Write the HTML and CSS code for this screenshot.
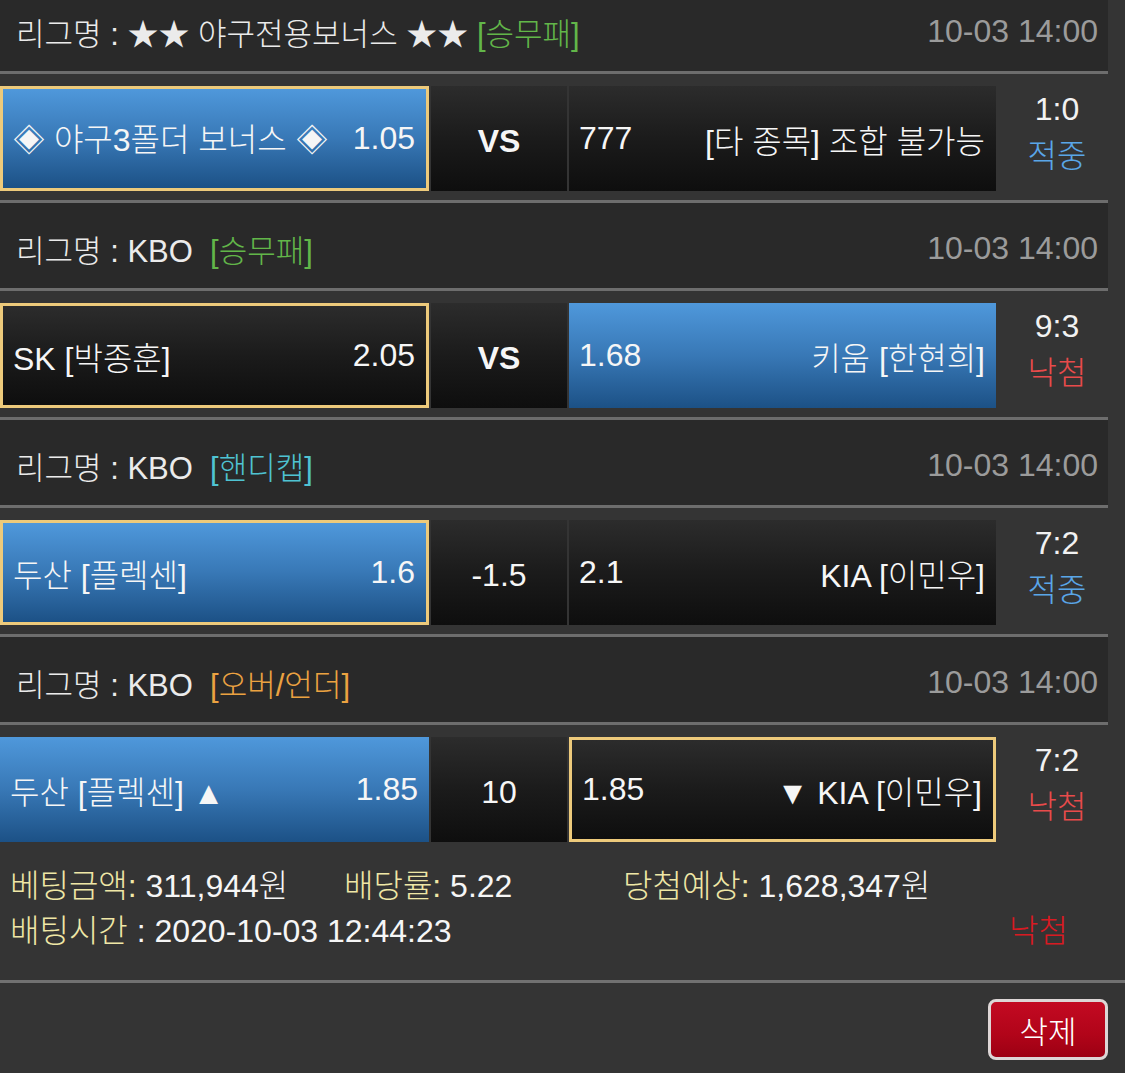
FILE: index.html
```html
<!DOCTYPE html>
<html lang="ko">
<head>
<meta charset="utf-8">
<title>Bet slip</title>
<link rel="stylesheet" href="styles.css">
</head>
<body>
<div class="slip">
  <div class="list">
    <div class="league">
      <div class="league-name">리그명 : ★★ 야구전용보너스 ★★ <span class="type type-wdl">[승무패]</span></div>
      <div class="league-date">10-03 14:00</div>
    </div>
    <div class="match">
      <div class="cell team team-home cell-blue cell-picked"><span>◈ 야구3폴더 보너스 ◈</span><span>1.05</span></div>
      <div class="cell mid cell-dark mid-vs">VS</div>
      <div class="cell team team-away cell-dark"><span>777</span><span>[타 종목] 조합 불가능</span></div>
      <div class="score"><div>1:0</div><div class="hit">적중</div></div>
    </div>

    <div class="league">
      <div class="league-name">리그명 : KBO &nbsp;<span class="type type-wdl">[승무패]</span></div>
      <div class="league-date">10-03 14:00</div>
    </div>
    <div class="match">
      <div class="cell team team-home cell-dark cell-picked"><span>SK [박종훈]</span><span>2.05</span></div>
      <div class="cell mid cell-dark mid-vs">VS</div>
      <div class="cell team team-away cell-blue"><span>1.68</span><span>키움 [한현희]</span></div>
      <div class="score"><div>9:3</div><div class="miss">낙첨</div></div>
    </div>

    <div class="league">
      <div class="league-name">리그명 : KBO &nbsp;<span class="type type-hc">[핸디캡]</span></div>
      <div class="league-date">10-03 14:00</div>
    </div>
    <div class="match">
      <div class="cell team team-home cell-blue cell-picked"><span>두산 [플렉센]</span><span>1.6</span></div>
      <div class="cell mid cell-dark">-1.5</div>
      <div class="cell team team-away cell-dark"><span>2.1</span><span>KIA [이민우]</span></div>
      <div class="score"><div>7:2</div><div class="hit">적중</div></div>
    </div>

    <div class="league">
      <div class="league-name">리그명 : KBO &nbsp;<span class="type type-ou">[오버/언더]</span></div>
      <div class="league-date">10-03 14:00</div>
    </div>
    <div class="match match-last">
      <div class="cell team team-home cell-blue"><span>두산 [플렉센] ▲</span><span>1.85</span></div>
      <div class="cell mid cell-dark">10</div>
      <div class="cell team team-away cell-dark cell-picked"><span>1.85</span><span>▼ KIA [이민우]</span></div>
      <div class="score"><div>7:2</div><div class="miss">낙첨</div></div>
    </div>
  </div>

  <div class="info">
    <div class="info-item info-amount"><span class="label">베팅금액:</span> 311,944원</div>
    <div class="info-item info-rate"><span class="label">배당률:</span> 5.22</div>
    <div class="info-item info-win"><span class="label">당첨예상:</span> 1,628,347원</div>
    <div class="info-item info-time"><span class="label">배팅시간</span> : 2020-10-03 12:44:23</div>
    <div class="info-item info-result">낙첨</div>
  </div>

  <div class="actions">
    <button class="btn-delete" type="button">삭제</button>
  </div>
</div>
</body>
</html>
```

FILE: styles.css
```css
html, body {
  margin: 0;
  padding: 0;
}

body {
  background: #343434;
  color: #f2f2f2;
  font-family: "Liberation Sans", Arial, "Noto Sans CJK KR", sans-serif;
  font-size: 32px;
  font-weight: 300;
  width: 1125px;
  height: 1073px;
  overflow: hidden;
}

.slip {
  margin-top: -14px;
}

.list {
  width: 1108px;
}

.league {
  height: 88px;
  box-sizing: border-box;
  background: #292929;
  border-bottom: 3px solid #6d6d6d;
  display: flex;
  align-items: center;
  justify-content: space-between;
  padding: 6px 10px 0 16px;
}

.league-name {
  color: #ebebeb;
  font-size: 31px;
}

.type-wdl { color: #62b649; }
.type-hc { color: #4fc3d2; }
.type-ou { color: #eba241; }

.league-date {
  color: #9b9b9b;
  font-size: 32px;
}

.match {
  display: flex;
  padding: 12px 0 9px;
  border-bottom: 3px solid #6d6d6d;
}

.match-last {
  border-bottom: none;
}

.cell {
  height: 105px;
  box-sizing: border-box;
  display: flex;
  align-items: center;
  font-size: 32px;
  color: #f6f6f6;
}

.team {
  justify-content: space-between;
  padding: 0 11px 0 10px;
}

.team-home {
  flex: 0 0 429px;
}

.mid {
  flex: 0 0 136px;
  margin-left: 2px;
  justify-content: center;
  padding-top: 6px;
}

.mid-vs {
  font-weight: bold;
}

.team-away {
  flex: 0 0 427px;
  margin-left: 2px;
}

.cell-blue {
  background: linear-gradient(to bottom, #4f98db 0%, #3878b6 50%, #1c5186 100%);
}

.cell-dark {
  background: linear-gradient(to bottom, #2c2c2c 0%, #1b1b1b 50%, #0e0e0e 100%);
}

.cell-picked {
  border: 3px solid #edca7b;
}

.score {
  flex: 0 0 102px;
  padding-left: 10px;
  text-align: center;
  font-size: 32px;
  line-height: 47px;
  color: #f2f2f2;
}

.hit { color: #5aa6e8; }
.miss { color: #e84b4b; }

.info {
  display: grid;
  grid-template-columns: 334px 279px 1fr;
  grid-template-rows: 45px 45px;
  align-items: center;
  padding: 9px 0 30px 10px;
  font-size: 32px;
  color: #f6f6f6;
  border-bottom: 3px solid #717171;
}

.label {
  color: #efe7a6;
}

.info-time {
  grid-column: 1 / 3;
}

.info-result {
  color: #d81a22;
  justify-self: end;
  padding-right: 57px;
}

.actions {
  display: flex;
  justify-content: flex-end;
  padding: 16px 17px 0 0;
}

.btn-delete {
  width: 120px;
  height: 61px;
  border: 3px solid #ddd6d6;
  border-radius: 8px;
  background: linear-gradient(to bottom, #c30a22 0%, #b10419 60%, #9c0013 100%);
  color: #ffffff;
  font-family: "Liberation Sans", "Noto Sans CJK KR", sans-serif;
  font-size: 31px;
  font-weight: 300;
  padding: 0;
}
```
